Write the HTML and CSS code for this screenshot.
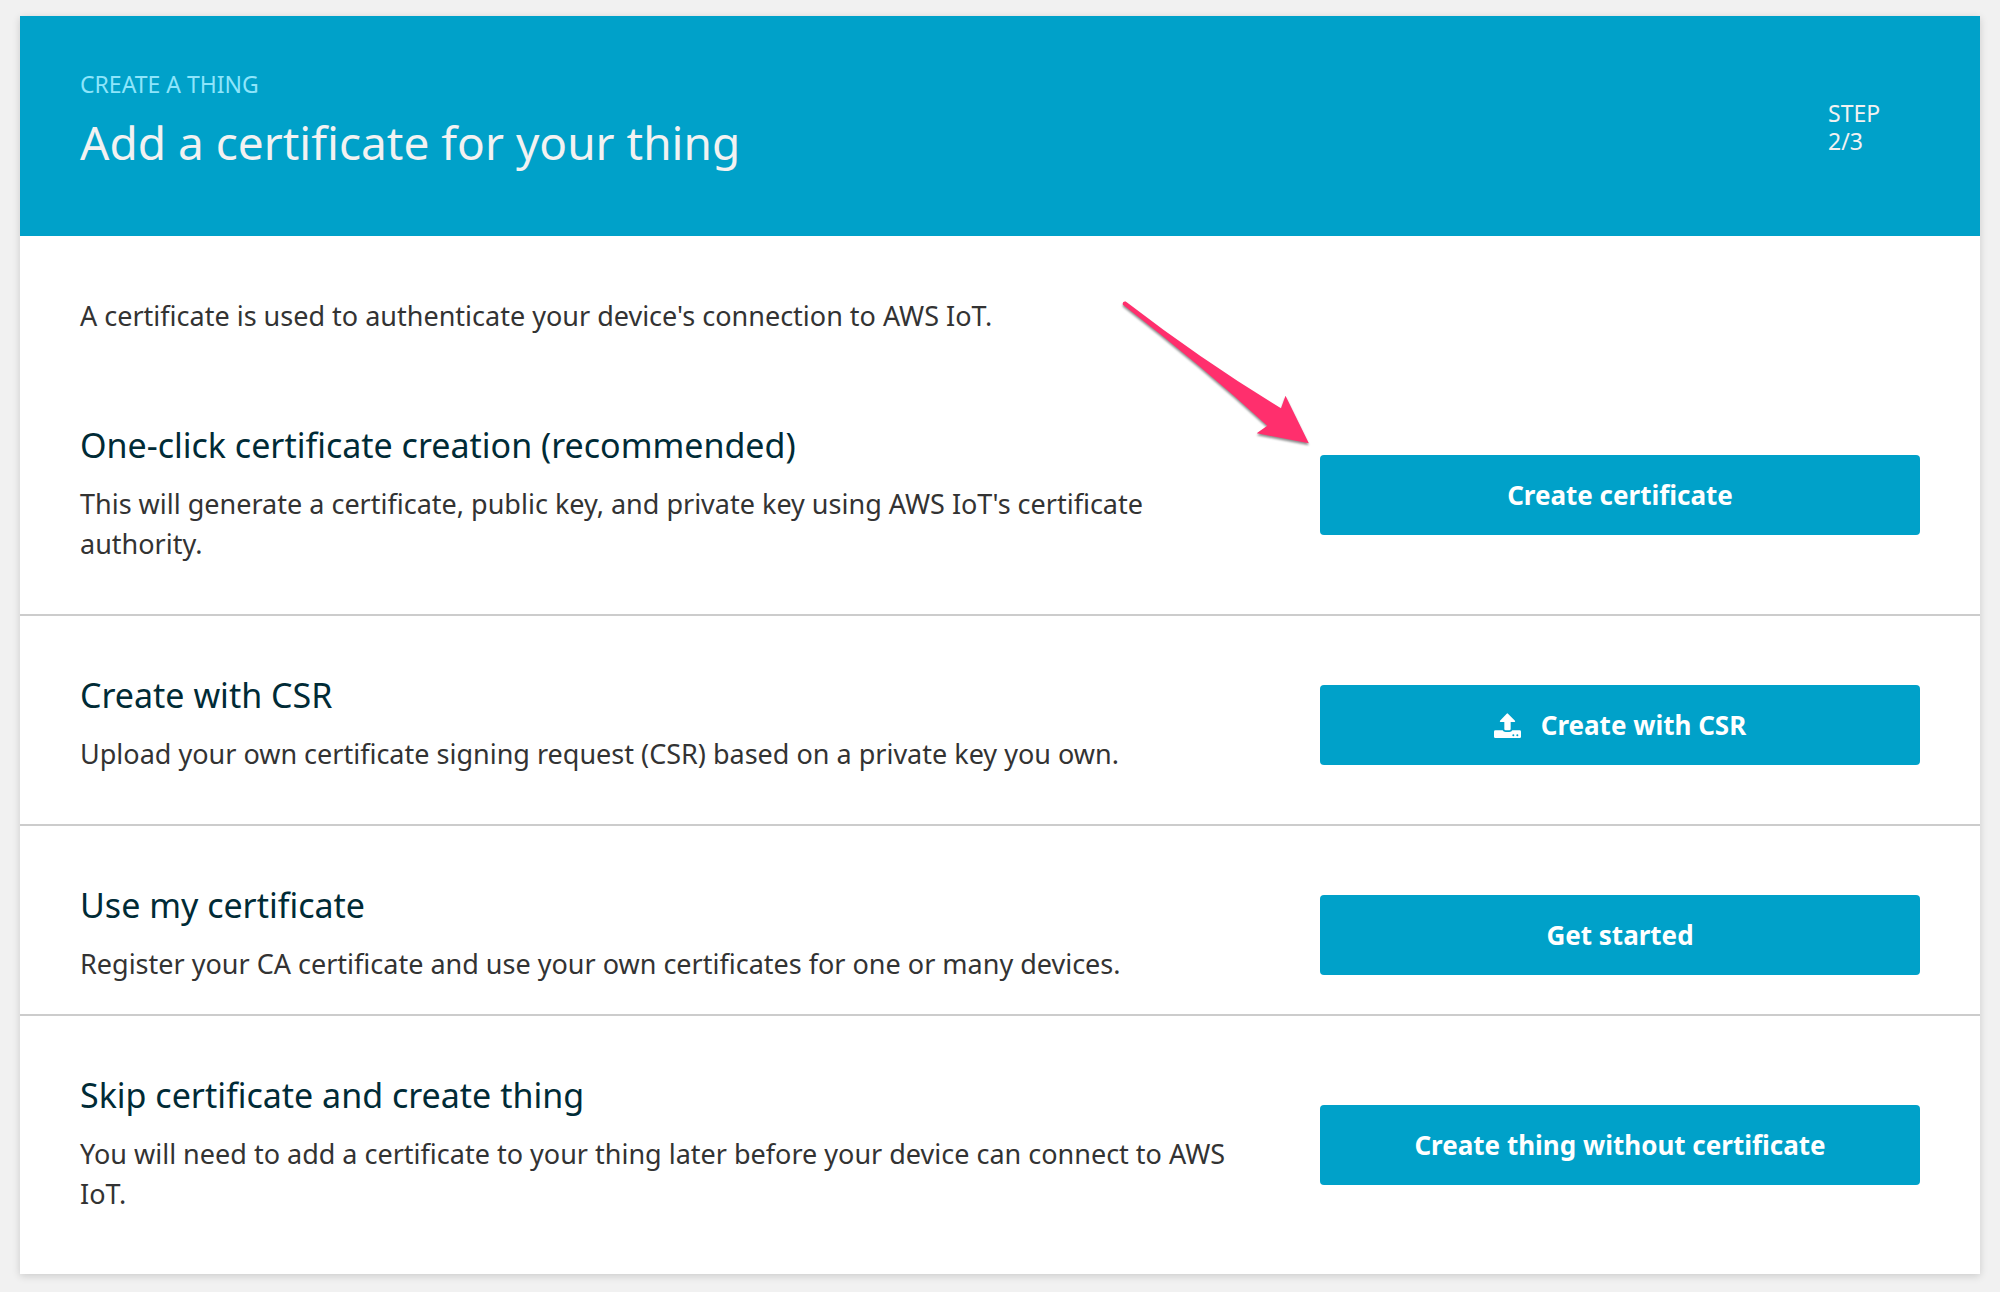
FILE: index.html
```html
<!DOCTYPE html>
<html lang="en">
<head>
<meta charset="utf-8">
<meta name="viewport" content="width=device-width, initial-scale=1">
<title>Add a certificate for your thing</title>
<link rel="stylesheet" href="styles.css">
</head>
<body>
<main class="card">
  <header class="banner">
    <div class="banner-text">
      <p class="eyebrow">CREATE A THING</p>
      <h1 class="title">Add a certificate for your thing</h1>
    </div>
    <p class="step">STEP<br>2/3</p>
  </header>
  <p class="intro">A certificate is used to authenticate your device's connection to AWS IoT.</p>
  <section class="option">
    <div class="option-text">
      <h2 class="option-title">One-click certificate creation (recommended)</h2>
      <p class="option-desc">This will generate a certificate, public key, and private key using AWS IoT's certificate authority.</p>
    </div>
    <div class="option-action">
      <button class="button" type="button">Create certificate</button>
      <svg class="pointer" width="210" height="165" viewBox="0 0 210 165" aria-hidden="true">
        <path d="M15.7 11.5Q93 71 171 118.3L175.5 105.7L198.8 153.3L146.7 143.3L157.3 135.7Q92 76 12.9 14.8Q12 11 15.7 11.5Z"/>
      </svg>
    </div>
  </section>
  <section class="option">
    <div class="option-text">
      <h2 class="option-title">Create with CSR</h2>
      <p class="option-desc">Upload your own certificate signing request (CSR) based on a private key you own.</p>
    </div>
    <div class="option-action">
      <button class="button" type="button">
        <svg class="button-icon" width="27" height="25" viewBox="0 0 81 75" aria-hidden="true">
          <path d="M38 2Q40 0 42 2L63 23Q65 27 61 27H50V48Q50 52 46 52H35Q31 52 31 48V27H20Q16 27 18 23Z"/>
          <path fill-rule="evenodd" d="M4 52H26Q28 57 35 57H46Q53 57 55 52H77Q81 52 81 56V71Q81 75 77 75H4Q0 75 0 71V56Q0 52 4 52ZM58 64a3 3 0 1 0 0 6a3 3 0 1 0 0-6ZM70 64a3 3 0 1 0 0 6a3 3 0 1 0 0-6Z"/>
        </svg>
        Create with CSR
      </button>
    </div>
  </section>
  <section class="option option-tight">
    <div class="option-text">
      <h2 class="option-title">Use my certificate</h2>
      <p class="option-desc">Register your CA certificate and use your own certificates for one or many devices.</p>
    </div>
    <div class="option-action">
      <button class="button" type="button">Get started</button>
    </div>
  </section>
  <section class="option option-last">
    <div class="option-text">
      <h2 class="option-title">Skip certificate and create thing</h2>
      <p class="option-desc">You will need to add a certificate to your thing later before your device can connect to AWS IoT.</p>
    </div>
    <div class="option-action">
      <button class="button" type="button">Create thing without certificate</button>
    </div>
  </section>
</main>
</body>
</html>
```
FILE: styles.css
```css
* { box-sizing: border-box; }

body {
  margin: 0;
  padding: 16px 20px 18px;
  background: #f1f1f1;
  color: #333;
  font-family: "Noto Sans", "Open Sans", sans-serif;
  font-size: 27px;
  line-height: 40px;
}

h1, h2, p { margin: 0; }

.card {
  background: #fff;
  box-shadow: 0 2px 8px rgba(0, 0, 0, 0.16);
}

.banner {
  display: flex;
  align-items: center;
  justify-content: space-between;
  padding: 54px 0 52px 60px;
  background: #00a1c9;
  color: #f2f2f2;
}

.eyebrow {
  color: #8ee5fb;
  font-size: 23px;
  line-height: 28px;
}

.title {
  margin: 12px 0 10px;
  font-size: 46px;
  font-weight: 400;
  line-height: 64px;
}

.step {
  flex: 0 0 152px;
  font-size: 23px;
  line-height: 28px;
}

.intro { padding: 60px 60px 30px; }

.option {
  display: grid;
  grid-template-columns: minmax(0, 1fr) 600px;
  column-gap: 60px;
  align-items: center;
  padding: 60px 60px 50px;
  border-bottom: 2px solid #ccc;
}

.option-tight { padding-bottom: 30px; }

.option-last {
  padding-bottom: 60px;
  border-bottom: 0;
}

.option-title {
  margin-bottom: 20px;
  color: #002b36;
  font-size: 34px;
  font-weight: 400;
  line-height: 38px;
}

.option-action { position: relative; }

.button {
  display: flex;
  align-items: center;
  justify-content: center;
  gap: 20px;
  width: 100%;
  padding: 20px;
  border: 0;
  border-radius: 4px;
  background: #00a1c9;
  color: #fff;
  font: inherit;
  font-size: 26px;
  font-weight: 700;
  cursor: pointer;
}

.button-icon { fill: #fff; }

.pointer {
  position: absolute;
  right: 100%;
  bottom: 100%;
  fill: #ff2f6d;
  filter: drop-shadow(0 2px 1px rgba(0, 0, 0, 0.45));
  pointer-events: none;
}
```
